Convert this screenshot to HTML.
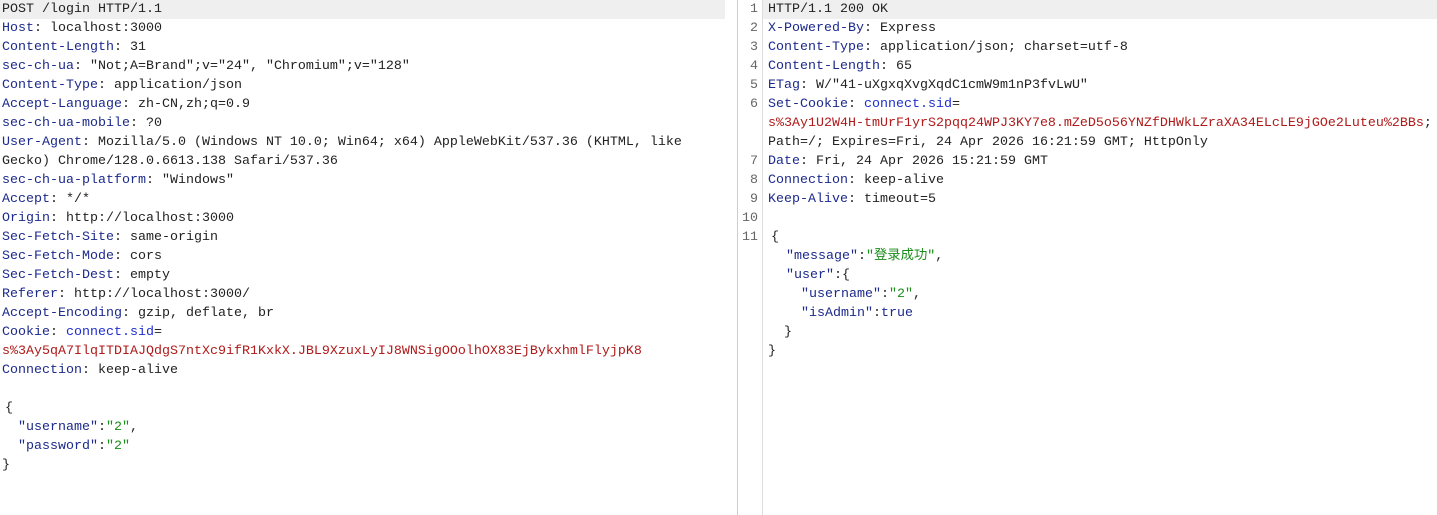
<!DOCTYPE html>
<html><head><meta charset="utf-8"><style>
body{margin:0;width:1437px;height:515px;background:#fff;overflow:hidden;position:relative;font-family:"Liberation Mono","Noto Sans CJK SC",monospace;font-size:13.33px;color:#222}
.l{position:absolute;height:19px;line-height:19px;white-space:pre}
.k{color:#1c2a8c}.b{color:#1f2fd0}.r{color:#b01a1a}.g{color:#1a8c1a}
.n{position:absolute;width:24px;text-align:right;left:734px;color:#666;height:19px;line-height:19px}
</style></head><body>
<div style="position:absolute;left:0;top:0;width:725px;height:19px;background:#efefef"></div>
<div style="position:absolute;left:763px;top:0;width:674px;height:19px;background:#efefef"></div>
<div style="position:absolute;left:737px;top:0;width:1px;height:515px;background:#ccc"></div>
<div style="position:absolute;left:762px;top:0;width:1px;height:515px;background:#ddd"></div>
<div id="L" style="position:absolute;left:2px;top:0">
<div class="l" style="top:0">POST /login HTTP/1.1</div>
<div class="l" style="top:19px"><span class="k">Host</span>: localhost:3000</div>
<div class="l" style="top:38px"><span class="k">Content-Length</span>: 31</div>
<div class="l" style="top:57px"><span class="k">sec-ch-ua</span>: "Not;A=Brand";v="24", "Chromium";v="128"</div>
<div class="l" style="top:76px"><span class="k">Content-Type</span>: application/json</div>
<div class="l" style="top:95px"><span class="k">Accept-Language</span>: zh-CN,zh;q=0.9</div>
<div class="l" style="top:114px"><span class="k">sec-ch-ua-mobile</span>: ?0</div>
<div class="l" style="top:133px"><span class="k">User-Agent</span>: Mozilla/5.0 (Windows NT 10.0; Win64; x64) AppleWebKit/537.36 (KHTML, like</div>
<div class="l" style="top:152px">Gecko) Chrome/128.0.6613.138 Safari/537.36</div>
<div class="l" style="top:171px"><span class="k">sec-ch-ua-platform</span>: "Windows"</div>
<div class="l" style="top:190px"><span class="k">Accept</span>: */*</div>
<div class="l" style="top:209px"><span class="k">Origin</span>: http://localhost:3000</div>
<div class="l" style="top:228px"><span class="k">Sec-Fetch-Site</span>: same-origin</div>
<div class="l" style="top:247px"><span class="k">Sec-Fetch-Mode</span>: cors</div>
<div class="l" style="top:266px"><span class="k">Sec-Fetch-Dest</span>: empty</div>
<div class="l" style="top:285px"><span class="k">Referer</span>: http://localhost:3000/</div>
<div class="l" style="top:304px"><span class="k">Accept-Encoding</span>: gzip, deflate, br</div>
<div class="l" style="top:323px"><span class="k">Cookie</span>: <span class="b">connect.sid</span>=</div>
<div class="l r" style="top:342px">s%3Ay5qA7IlqITDIAJQdgS7ntXc9ifR1KxkX.JBL9XzuxLyIJ8WNSigOOolhOX83EjBykxhmlFlyjpK8</div>
<div class="l" style="top:361px"><span class="k">Connection</span>: keep-alive</div>
<div class="l" style="top:399px;left:3px">{</div>
<div class="l" style="top:418px">  <span class="k">"username"</span>:<span class="g">"2"</span>,</div>
<div class="l" style="top:437px">  <span class="k">"password"</span>:<span class="g">"2"</span></div>
<div class="l" style="top:456px">}</div>
</div>
<div class="n" style="top:0">1</div><div class="n" style="top:19px">2</div><div class="n" style="top:38px">3</div><div class="n" style="top:57px">4</div><div class="n" style="top:76px">5</div><div class="n" style="top:95px">6</div><div class="n" style="top:152px">7</div><div class="n" style="top:171px">8</div><div class="n" style="top:190px">9</div><div class="n" style="top:209px">10</div><div class="n" style="top:228px">11</div>
<div style="position:absolute;left:768px;top:0">
<div class="l" style="top:0">HTTP/1.1 200 OK</div>
<div class="l" style="top:19px"><span class="k">X-Powered-By</span>: Express</div>
<div class="l" style="top:38px"><span class="k">Content-Type</span>: application/json; charset=utf-8</div>
<div class="l" style="top:57px"><span class="k">Content-Length</span>: 65</div>
<div class="l" style="top:76px"><span class="k">ETag</span>: W/"41-uXgxqXvgXqdC1cmW9m1nP3fvLwU"</div>
<div class="l" style="top:95px"><span class="k">Set-Cookie</span>: <span class="b">connect.sid</span>=</div>
<div class="l" style="top:114px"><span class="r">s%3Ay1U2W4H-tmUrF1yrS2pqq24WPJ3KY7e8.mZeD5o56YNZfDHWkLZraXA34ELcLE9jGOe2Luteu%2BBs</span>;</div>
<div class="l" style="top:133px">Path=/; Expires=Fri, 24 Apr 2026 16:21:59 GMT; HttpOnly</div>
<div class="l" style="top:152px"><span class="k">Date</span>: Fri, 24 Apr 2026 15:21:59 GMT</div>
<div class="l" style="top:171px"><span class="k">Connection</span>: keep-alive</div>
<div class="l" style="top:190px"><span class="k">Keep-Alive</span>: timeout=5</div>
<div class="l" style="top:228px;left:3px">{</div>
<div class="l" style="top:247px;left:2px">  <span class="k">"message"</span>:<span class="g">"登录成功"</span>,</div>
<div class="l" style="top:266px;left:2px">  <span class="k">"user"</span>:{</div>
<div class="l" style="top:285px;left:1px">    <span class="k">"username"</span>:<span class="g">"2"</span>,</div>
<div class="l" style="top:304px;left:1px">    <span class="k">"isAdmin"</span>:<span class="k">true</span></div>
<div class="l" style="top:323px">  }</div>
<div class="l" style="top:342px">}</div>
</div>
</body></html>
